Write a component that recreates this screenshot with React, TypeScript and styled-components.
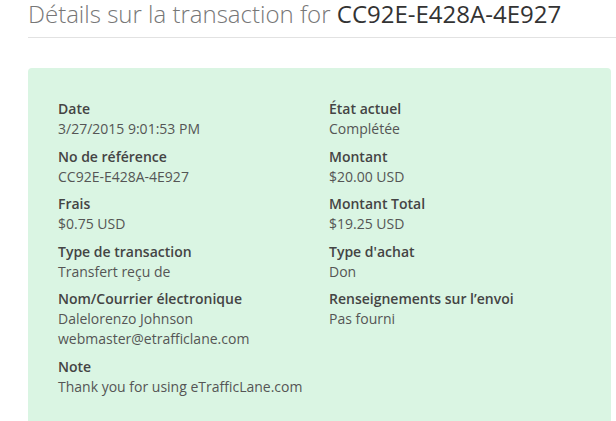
import React from 'react';
import styled, { createGlobalStyle } from 'styled-components';

const GlobalStyle = createGlobalStyle`
  html, body {
    margin: 0;
    padding: 0;
    background: #fff;
    font-family: 'Open Sans', 'Liberation Sans', sans-serif;
  }
`;

type Field = { label: string; values: string[] };

const leftFields: Field[] = [
  { label: 'Date', values: ['3/27/2015 9:01:53 PM'] },
  { label: 'No de référence', values: ['CC92E-E428A-4E927'] },
  { label: 'Frais', values: ['$0.75 USD'] },
  { label: 'Type de transaction', values: ['Transfert reçu de'] },
  { label: 'Nom/Courrier électronique', values: ['Dalelorenzo Johnson', 'webmaster@etrafficlane.com'] },
  { label: 'Note', values: ['Thank you for using eTrafficLane.com'] },
];

const rightFields: Field[] = [
  { label: 'État actuel', values: ['Complétée'] },
  { label: 'Montant', values: ['$20.00 USD'] },
  { label: 'Montant Total', values: ['$19.25 USD'] },
  { label: "Type d'achat", values: ['Don'] },
  { label: 'Renseignements sur l’envoi', values: ['Pas fourni'] },
];

const FieldList: React.FC<{ fields: Field[] }> = ({ fields }) => (
  <Column>
    {fields.map((f) => (
      <Group key={f.label}>
        <Label>{f.label}</Label>
        {f.values.map((v) => (
          <Value key={v}>{v}</Value>
        ))}
      </Group>
    ))}
  </Column>
);

const App: React.FC = () => (
  <>
    <GlobalStyle />
    <Page>
      <Title>
        Détails sur la transaction for <TxId>CC92E-E428A-4E927</TxId>
      </Title>
      <Divider />
      <DetailsBox>
        <FieldList fields={leftFields} />
        <FieldList fields={rightFields} />
      </DetailsBox>
    </Page>
  </>
);

const Page = styled.div`
  padding-left: 28px;
  height: 421px;
  overflow: hidden;
`;

const Title = styled.h1`
  margin: 0;
  font-size: 24px;
  font-weight: 300;
  line-height: 28px;
  color: #777;
  white-space: nowrap;
`;

const TxId = styled.span`
  font-weight: 400;
  color: #333;
`;

const Divider = styled.div`
  margin-top: 9px;
  height: 1px;
  background: #e2e2e2;
`;

const DetailsBox = styled.div`
  margin-top: 30px;
  margin-right: 5px;
  padding: 31px 30px 40px;
  background: #daf5e3;
  border-radius: 4px;
  display: grid;
  grid-template-columns: 271px 1fr;
`;

const Column = styled.div`
  display: flex;
  flex-direction: column;
  gap: 7.5px;
`;

const Group = styled.div`
  display: flex;
  flex-direction: column;
`;

const Label = styled.div`
  font-size: 14px;
  font-weight: 600;
  line-height: 20px;
  color: #444;
`;

const Value = styled.div`
  font-size: 14px;
  font-weight: 400;
  line-height: 20px;
  color: #555;
`;

export default App;
